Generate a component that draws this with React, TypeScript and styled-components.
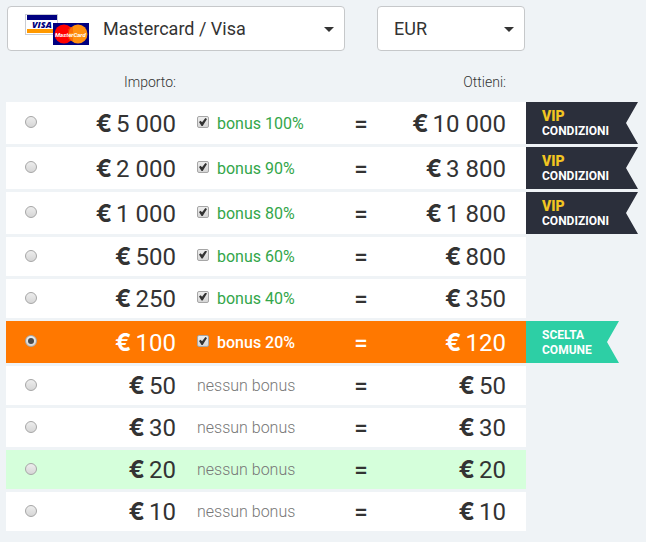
import React, { useState } from "react";
import styled, { createGlobalStyle, css } from "styled-components";

const GlobalStyle = createGlobalStyle`
  body {
    margin: 0;
    background: #eff3f6;
    color: #333;
    font-family: Roboto, "Liberation Sans", sans-serif;
  }
`;

const Page = styled.main`
  padding: 6px 8px 8px 6px;
`;

const Toolbar = styled.div`
  display: grid;
  grid-template-columns: 338fr 148fr;
  gap: 32px;
  margin: 0 113px 0 1px;
`;

const Field = styled.label`
  position: relative;
  display: block;
`;

const Select = styled.select<{ $inset: number }>`
  appearance: none;
  display: block;
  width: 100%;
  height: 45px;
  padding: 0 32px 0 ${(p) => p.$inset}px;
  border: 1px solid #c6c8ca;
  border-radius: 4px;
  background: #fff;
  color: #333;
  font: 400 18px/24px Roboto, sans-serif;
`;

const Caret = styled.svg`
  position: absolute;
  right: 11px;
  top: 21px;
  pointer-events: none;
`;

const CardLogo = styled.svg`
  position: absolute;
  left: 18px;
  top: 8px;
  pointer-events: none;
`;

const Table = styled.table`
  width: 100%;
  margin-top: 12px;
  table-layout: fixed;
  border-collapse: separate;
  border-spacing: 0 3px;
`;

const Col = styled.col<{ $w?: number }>`
  width: ${(p) => (p.$w ? `${p.$w}px` : "auto")};
`;

const HeadCell = styled.th`
  height: 31px;
  padding: 0 20px 2px 0;
  font-size: 14px;
  font-weight: 300;
  line-height: 20px;
  text-align: right;
  vertical-align: middle;
`;

const AmountHead = styled(HeadCell)`
  padding-right: 0;
`;

type Tone = "plain" | "selected" | "hover";

const Row = styled.tr<{ $tone: Tone; $tall: boolean }>`
  height: ${(p) => (p.$tall ? 42 : 39)}px;
  --drop: ${(p) => (p.$tall ? 2 : 0)}px;
  --row: ${(p) => ({ plain: "#fff", selected: "#ff7800", hover: "#d5ffdb" })[p.$tone]};
  --ink: ${(p) => (p.$tone === "selected" ? "#fff" : "#333")};
  --bonus: ${(p) => (p.$tone === "selected" ? "#fff" : "#33a64a")};
  --bonus-weight: ${(p) => (p.$tone === "selected" ? 500 : 400)};
`;

const Cell = styled.td`
  padding: var(--drop) 0 0;
  background: var(--row);
  color: var(--ink);
  vertical-align: middle;
`;

const RadioCell = styled(Cell)`
  padding: 0 0 2px 19px;
`;

const Money = styled(Cell)<{ $last?: boolean }>`
  padding-right: ${(p) => (p.$last ? 20 : 0)}px;
  font-size: 24px;
  line-height: 28px;
  text-align: right;
  white-space: nowrap;
`;

const Euro = styled.span`
  margin-right: 4px;
  font-family: Inter, "Open Sans", sans-serif;
  font-weight: 700;
  line-height: 20px;
`;

const BonusCell = styled(Cell)`
  padding-left: 21px;
`;

const Equals = styled(Cell)`
  font-size: 24px;
  font-weight: 500;
  line-height: 28px;
  text-align: center;
`;

const control = css`
  appearance: none;
  display: grid;
  place-items: center;
  flex: none;
  box-sizing: border-box;
  width: 12px;
  height: 12px;
  margin: 0;
  border: 1px solid #a6a6a6;
  background: linear-gradient(#ededed, #d6d6d6);
`;

const Radio = styled.input`
  ${control}
  border-radius: 50%;

  &:checked::before {
    content: "";
    width: 6px;
    height: 6px;
    border-radius: 50%;
    background: #4a4a4a;
  }
`;

const Check = styled.input`
  ${control}
  margin-top: 2px;
  border-radius: 2px;

  &:checked::before {
    content: "";
    width: 8px;
    height: 8px;
    background: #333;
    clip-path: polygon(0 50%, 20% 34%, 38% 54%, 80% 0, 100% 14%, 46% 100%, 32% 100%);
  }
`;

const BonusLabel = styled.label`
  display: flex;
  align-items: flex-start;
  gap: 8px;
  color: var(--bonus);
  font-size: 16px;
  font-weight: var(--bonus-weight);
  line-height: 20px;
`;

const NoBonus = styled.span`
  color: #777;
  font-size: 16px;
  font-weight: 300;
  line-height: 20px;
`;

const FlagCell = styled.td`
  padding: 0;
`;

const Flag = styled.div<{ $vip: boolean }>`
  box-sizing: border-box;
  width: ${(p) => (p.$vip ? 112 : 93)}px;
  height: 42px;
  padding: 7px 0 5px 16px;
  background: ${(p) => (p.$vip ? "#2b2f3b" : "#2dcfa5")};
  color: #fff;
  font-size: 12px;
  font-weight: 700;
  line-height: 15px;
  clip-path: polygon(0 0, 100% 0, calc(100% - 12px) 50%, 100% 100%, 0 100%);
`;

const FlagLine = styled.div<{ $gold?: boolean }>`
  ${(p) => p.$gold && "color: #f2c521; font-size: 14px; font-weight: 900;"}
`;

function CaretIcon() {
  return (
    <Caret width="10" height="5" viewBox="0 0 10 5" aria-hidden="true">
      <path d="M0 0h10L5 5z" fill="#333" />
    </Caret>
  );
}

function Cards() {
  return (
    <CardLogo width="64" height="31" viewBox="0 0 64 31" aria-hidden="true">
      <rect x="0.5" y="0.5" width="32" height="20" fill="#fff" stroke="#c9ccd4" />
      <path d="M2 1h30v5H2z" fill="#000080" />
      <path d="M2 15h30v4H2z" fill="#ff9900" />
      <text x="7" y="14" fontFamily="Open Sans, sans-serif" fontSize="9" fontWeight="800" fontStyle="italic" fill="#000080">
        VISA
      </text>
      <rect x="28" y="9" width="36" height="22" fill="#000080" />
      <circle cx="39" cy="20" r="9.5" fill="#f00" />
      <circle cx="53" cy="20" r="9.5" fill="#ff9010" />
      <path d="M44 14h4M43 16h5M43 18h5M43 24h5M44 26h4" stroke="#f45000" />
      <text x="30" y="23" fontFamily="Roboto, sans-serif" fontSize="6" fontWeight="700" fontStyle="italic" fill="#fff">
        MasterCard
      </text>
    </CardLogo>
  );
}

type Offer = {
  amount: string;
  get: string;
  bonus?: string;
  flag?: "vip" | "common";
  hover?: boolean;
};

const offers: Offer[] = [
  { amount: "5 000", get: "10 000", bonus: "100%", flag: "vip" },
  { amount: "2 000", get: "3 800", bonus: "90%", flag: "vip" },
  { amount: "1 000", get: "1 800", bonus: "80%", flag: "vip" },
  { amount: "500", get: "800", bonus: "60%" },
  { amount: "250", get: "350", bonus: "40%" },
  { amount: "100", get: "120", bonus: "20%", flag: "common" },
  { amount: "50", get: "50" },
  { amount: "30", get: "30" },
  { amount: "20", get: "20", hover: true },
  { amount: "10", get: "10" },
];

export default function App() {
  const [selected, setSelected] = useState("100");

  return (
    <>
      <GlobalStyle />
      <Page>
        <Toolbar>
          <Field>
            <Select $inset={95} aria-label="Metodo di pagamento">
              <option>Mastercard / Visa</option>
            </Select>
            <Cards />
            <CaretIcon />
          </Field>
          <Field>
            <Select $inset={16} aria-label="Valuta">
              <option>EUR</option>
            </Select>
            <CaretIcon />
          </Field>
        </Toolbar>
        <Table>
          <colgroup>
            <Col $w={50} />
            <Col $w={120} />
            <Col $w={160} />
            <Col $w={50} />
            <Col />
            <Col $w={112} />
          </colgroup>
          <thead>
            <tr>
              <td />
              <AmountHead scope="col">Importo:</AmountHead>
              <td />
              <td />
              <HeadCell scope="col">Ottieni:</HeadCell>
              <td />
            </tr>
          </thead>
          <tbody>
            {offers.map((o) => (
              <Row
                key={o.amount}
                $tall={Boolean(o.flag)}
                $tone={selected === o.amount ? "selected" : o.hover ? "hover" : "plain"}
              >
                <RadioCell>
                  <Radio
                    type="radio"
                    name="amount"
                    aria-label={`€ ${o.amount}`}
                    checked={selected === o.amount}
                    onChange={() => setSelected(o.amount)}
                  />
                </RadioCell>
                <Money>
                  <Euro>€</Euro>
                  {o.amount}
                </Money>
                <BonusCell>
                  {o.bonus ? (
                    <BonusLabel>
                      <Check type="checkbox" defaultChecked />
                      bonus {o.bonus}
                    </BonusLabel>
                  ) : (
                    <NoBonus>nessun bonus</NoBonus>
                  )}
                </BonusCell>
                <Equals>=</Equals>
                <Money $last>
                  <Euro>€</Euro>
                  {o.get}
                </Money>
                <FlagCell>
                  {o.flag && (
                    <Flag $vip={o.flag === "vip"}>
                      <FlagLine $gold={o.flag === "vip"}>{o.flag === "vip" ? "VIP" : "SCELTA"}</FlagLine>
                      <FlagLine>{o.flag === "vip" ? "CONDIZIONI" : "COMUNE"}</FlagLine>
                    </Flag>
                  )}
                </FlagCell>
              </Row>
            ))}
          </tbody>
        </Table>
      </Page>
    </>
  );
}
